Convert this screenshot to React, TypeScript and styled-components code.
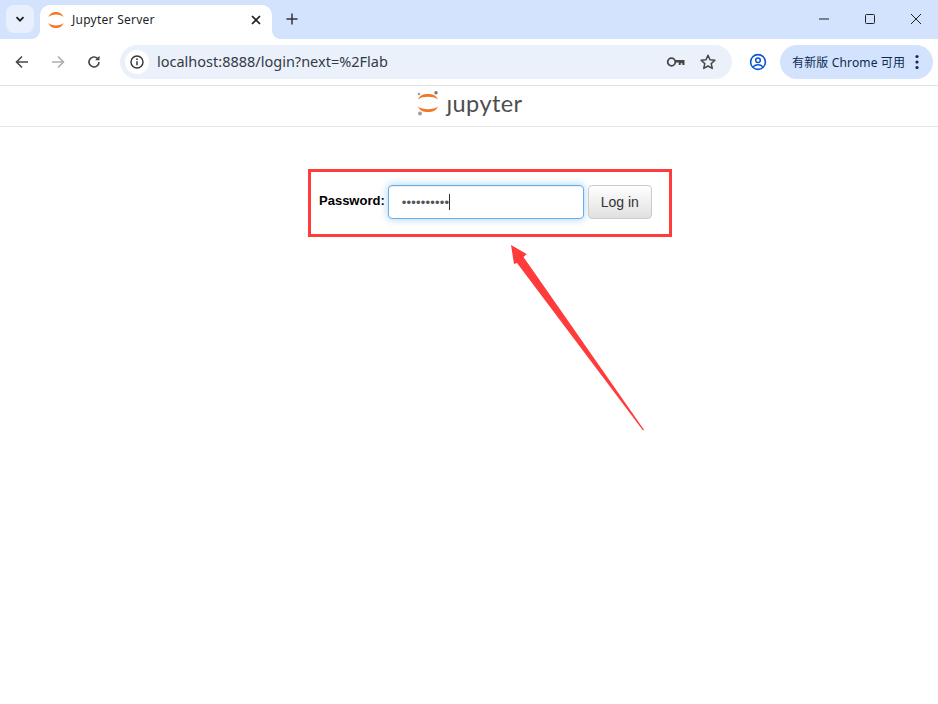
import React from "react";
import styled, { createGlobalStyle } from "styled-components";

const Global = createGlobalStyle`
  html, body { margin: 0; padding: 0; background: #fff; }
  body { font-family: "Liberation Sans", Arial, sans-serif; }
  * { box-sizing: border-box; }
`;
const Page = styled.div`
  width: 938px; height: 704px; overflow: hidden; position: relative; background: #fff;
`;
const TabStrip = styled.div`
  height: 39px; background: #d3e3fd; display: flex; align-items: flex-start; padding: 5px 0 0 6px; position: relative;
`;
const TabSearch = styled.div`
  width: 28px; height: 28px; border-radius: 8px; background: #e9f0fd;
  display: flex; align-items: center; justify-content: center;
`;
const Tab = styled.div`
  width: 232px; height: 34px; margin-left: 6px; background: #fff; border-radius: 10px 10px 0 0;
  display: flex; align-items: center; padding: 0 8px 5px 8px; position: relative;
  &::before, &::after {
    content: ""; position: absolute; bottom: 0; width: 8px; height: 8px;
  }
  &::before { left: -8px; background: radial-gradient(circle at 0 0, #d3e3fd 7.5px, #fff 8px); }
  &::after { right: -8px; background: radial-gradient(circle at 100% 0, #d3e3fd 7.5px, #fff 8px); }
`;
const TabTitle = styled.span`
  font-family: "Noto Sans", "Open Sans", sans-serif; font-size: 12px; color: #1f1f1f; margin-left: 8px; flex: 1; letter-spacing: 0.25px;
`;
const NewTab = styled.div`
  width: 28px; height: 28px; margin-left: 6px; display: flex; align-items: center; justify-content: center;
`;
const WindowControls = styled.div`
  margin-left: auto; margin-right: -1px; margin-top: -5px; display: flex; height: 38px; align-items: center;
`;
const WinButton = styled.div`
  width: 46px; height: 38px; display: flex; align-items: center; justify-content: center;
`;
const Toolbar = styled.div`
  height: 47px; background: #fff; border-radius: 8px 8px 0 0; border-bottom: 1px solid #e2e2e2;
  display: flex; align-items: center; padding: 0 5px 0 6px;
`;
const NavButton = styled.div`
  width: 32px; height: 32px; margin-right: 4px; display: flex; align-items: center; justify-content: center;
`;
const Omnibox = styled.div`
  width: 612px; height: 34px; margin-left: 6px; border-radius: 17px; background: #ebf1fb; display: flex; align-items: center; padding: 0 12px 0 5px;
`;
const InfoChip = styled.div`
  width: 24px; height: 24px; border-radius: 12px; background: #fff; display: flex; align-items: center; justify-content: center;
`;
const Url = styled.span`
  font-family: "Noto Sans", "Open Sans", sans-serif; font-size: 14.5px; color: #333a45; margin-left: 8px; padding-bottom: 2px; flex: 1;
`;
const OmniIcon = styled.div`
  width: 24px; height: 24px; margin-left: 8px; display: flex; align-items: center; justify-content: center;
`;
const Profile = styled.div`
  width: 28px; height: 28px; margin-left: 12px; display: flex; align-items: center; justify-content: center;
`;
const Update = styled.div`
  width: 153px; height: 34px; margin-left: 8px; border-radius: 17px; background: #d3e3fd; display: flex; align-items: center; padding: 0 14px 0 12px;
`;
const UpdateText = styled.span`
  font-family: "Noto Sans", "Noto Sans CJK SC", sans-serif; font-size: 12px; letter-spacing: 0.15px; color: #0a2a52; flex: 1; white-space: nowrap;
`;
const SiteHeader = styled.div`
  height: 41px; border-bottom: 1px solid #e3e3e3; display: flex; align-items: center; justify-content: center; padding: 0 0 6px 0;
`;
const LogoText = styled.span`
  font-family: "Lato", "Open Sans", sans-serif; font-size: 23.5px; color: #4e4e4e; margin-left: 7px; line-height: 28px; letter-spacing: 0.4px;
`;
const Main = styled.div`
  display: flex; justify-content: center; padding: 42px 0 0 42px;
`;
const FormBox = styled.div`
  width: 364px; height: 68px; border: 3px solid #ff3b3b; display: flex; align-items: center; padding: 0 0 2px 8px;
`;
const Label = styled.label`
  font-weight: 700; font-size: 13px; color: #000; margin-right: 3px; margin-top: -3px; white-space: nowrap;
`;
const PasswordField = styled.div`
  width: 196px; height: 34px; border: 1px solid #66afe9; border-radius: 4px; background: #fff;
  box-shadow: inset 0 1px 1px rgba(0,0,0,.075), 0 0 8px rgba(102,175,233,.6);
  display: flex; align-items: center; padding: 0 0 0 13px; font-size: 14px; color: #555;
`;
const Dots = styled.span`
  font-family: "Liberation Sans", sans-serif; font-size: 13px; letter-spacing: 0.2px; line-height: 1; color: #555; white-space: nowrap;
`;
const Caret = styled.span`
  width: 1px; height: 16px; background: #333;
`;
const LoginButton = styled.button`
  width: 64px; height: 34px; margin-left: 4px; border: 1px solid #ccc; border-radius: 4px; padding: 0;
  background: linear-gradient(to bottom, #fff 0%, #e0e0e0 100%); font: 14px "Liberation Sans", Arial, sans-serif; color: #333;
`;
const ArrowLayer = styled.svg`
  position: absolute; left: 500px; top: 235px; width: 150px; height: 200px; pointer-events: none;
`;

export default function App() {
  return (
    <Page>
      <Global />
      <TabStrip>
        <TabSearch>
          <svg width="12" height="12" viewBox="0 0 12 12"><path d="M2.500 4.200 6 7.700l3.500-3.500" fill="none" stroke="#1f1f1f" strokeWidth="1.8" /></svg>
        </TabSearch>
        <Tab>
          <svg width="16" height="16" viewBox="3 3 18 18">
            <path d="M3.500 9C5 4.600 8.400 3 12 3s7 1.600 8.500 6C18.600 6.900 15.500 5.900 12 5.900S5.400 6.900 3.500 9Z" fill="#f37726" />
            <path d="M3.500 15C5 19.400 8.400 21 12 21s7-1.600 8.500-6C18.600 17.100 15.500 18.100 12 18.100S5.400 17.100 3.500 15Z" fill="#f37726" />
          </svg>
          <TabTitle>Jupyter Server</TabTitle>
          <svg width="16" height="16" viewBox="0 0 16 16"><path d="M4 4l8 8M12 4l-8 8" stroke="#1f1f1f" strokeWidth="1.7" /></svg>
        </Tab>
        <NewTab>
          <svg width="16" height="16" viewBox="0 0 16 16"><path d="M8 2.500v11M2.500 8h11" stroke="#333" strokeWidth="1.5" /></svg>
        </NewTab>
        <WindowControls>
          <WinButton><svg width="12" height="12" viewBox="0 0 12 12"><path d="M1 6h10" stroke="#222" strokeWidth="1" /></svg></WinButton>
          <WinButton><svg width="12" height="12" viewBox="0 0 12 12"><rect x="1.500" y="1.500" width="9" height="9" rx="1" fill="none" stroke="#222" /></svg></WinButton>
          <WinButton><svg width="12" height="12" viewBox="0 0 12 12"><path d="M1 1l10 10M11 1L1 11" stroke="#222" /></svg></WinButton>
        </WindowControls>
      </TabStrip>
      <Toolbar>
        <NavButton>
          <svg width="16" height="16" viewBox="0 0 16 16"><path d="M14 8H2.500M8 2.500 2.500 8 8 13.500" fill="none" stroke="#474747" strokeWidth="1.6" /></svg>
        </NavButton>
        <NavButton>
          <svg width="16" height="16" viewBox="0 0 16 16"><path d="M2 8h11.500M8 2.500 13.500 8 8 13.500" fill="none" stroke="#aeaeae" strokeWidth="1.6" /></svg>
        </NavButton>
        <NavButton>
          <svg width="16" height="16" viewBox="0 0 16 16"><path d="M13 8a5 5 0 1 1-1.500-3.600" fill="none" stroke="#474747" strokeWidth="1.6" /><path d="M13.500 1.800v4.400H9.100Z" fill="#474747" /></svg>
        </NavButton>
        <Omnibox>
          <InfoChip>
            <svg width="16" height="16" viewBox="0 0 16 16"><circle cx="8" cy="8" r="6" fill="none" stroke="#333" strokeWidth="1.4" /><path d="M8 7.200v4" stroke="#333" strokeWidth="1.5" /><circle cx="8" cy="5.200" r="0.9" fill="#333" /></svg>
          </InfoChip>
          <Url>localhost:8888/login?next=%2Flab</Url>
          <OmniIcon>
            <svg width="20" height="14" viewBox="0 0 20 14"><circle cx="5.500" cy="7" r="3.800" fill="none" stroke="#474747" strokeWidth="1.8" /><path d="M9 5h9.500v5h-2.200V8.200h-1.600V10h-2V7.600H9Z" fill="#474747" /></svg>
          </OmniIcon>
          <OmniIcon>
            <svg width="18" height="18" viewBox="0 0 18 18"><path d="M9 2.300l2 4.500 4.900.5-3.700 3.300 1.100 4.800L9 13l-4.300 2.400 1.100-4.800L2.100 7.300 7 6.800Z" fill="none" stroke="#474747" strokeWidth="1.5" strokeLinejoin="round" /></svg>
          </OmniIcon>
        </Omnibox>
        <Profile>
          <svg width="18" height="18" viewBox="0 0 18 18"><circle cx="9" cy="9" r="7.400" fill="none" stroke="#0b57d0" strokeWidth="1.6" /><circle cx="9" cy="7.200" r="2.300" fill="none" stroke="#0b57d0" strokeWidth="1.5" /><path d="M4.300 13.800c1.200-1.500 2.800-2 4.700-2s3.500.5 4.700 2" fill="none" stroke="#0b57d0" strokeWidth="1.5" /></svg>
        </Profile>
        <Update>
          <UpdateText>有新版 Chrome 可用</UpdateText>
          <svg width="4" height="16" viewBox="0 0 4 16"><circle cx="2" cy="2.500" r="1.600" fill="#0a2a52" /><circle cx="2" cy="8" r="1.600" fill="#0a2a52" /><circle cx="2" cy="13.500" r="1.600" fill="#0a2a52" /></svg>
        </Update>
      </Toolbar>
      <SiteHeader>
        <svg width="24" height="28" viewBox="0 0 24 28">
          <path d="M2 10.500C4 6 7.600 5 12 5s8 1 10 5.500C19.500 8.500 16 7.800 12 7.800S4.500 8.500 2 10.500Z" fill="#f37726" />
          <path d="M2 17.500C4 22 7.600 23 12 23s8-1 10-5.500C19.500 19.500 16 20.200 12 20.200S4.500 19.500 2 17.500Z" fill="#f37726" />
          <circle cx="20" cy="3.800" r="1.700" fill="#767677" />
          <circle cx="3" cy="5" r="1.200" fill="#989798" />
          <circle cx="4" cy="24.500" r="2" fill="#9e9e9e" />
        </svg>
        <LogoText>ȷupyter</LogoText>
      </SiteHeader>
      <Main>
        <FormBox>
          <Label>Password:</Label>
          <PasswordField>
            <Dots>••••••••••</Dots>
            <Caret />
          </PasswordField>
          <LoginButton type="button">Log in</LoginButton>
        </FormBox>
      </Main>
      <ArrowLayer viewBox="0 0 150 200">
        <path d="M11 10 26.700 19 23.500 22 144 194.800 143 195.500 17 28 14 29Z" fill="#ff3b3b" />
      </ArrowLayer>
    </Page>
  );
}
